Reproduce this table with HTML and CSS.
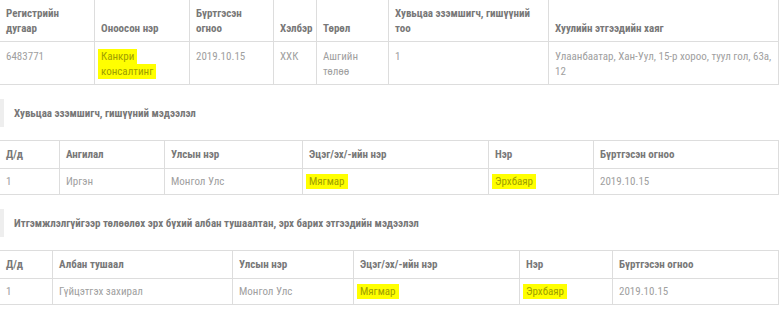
FILE: index.html
```html
<!DOCTYPE html>
<html lang="mn">
<head>
<meta charset="utf-8">
<link rel="stylesheet" href="styles.css">
</head>
<body>
<div class="page">
  <table class="grid grid-main">
    <colgroup>
      <col style="width:95px"><col style="width:95px"><col style="width:84px"><col style="width:43px"><col style="width:72px"><col style="width:160px"><col style="width:230px">
    </colgroup>
    <thead>
      <tr>
        <th>Регистрийн дугаар</th>
        <th>Оноосон нэр</th>
        <th>Бүртгэсэн огноо</th>
        <th>Хэлбэр</th>
        <th>Төрөл</th>
        <th>Хувьцаа эзэмшигч, гишүүний тоо</th>
        <th>Хуулийн этгээдийн хаяг</th>
      </tr>
    </thead>
    <tbody>
      <tr>
        <td>6483771</td>
        <td><span class="mark mark-name">Канкри<br>консалтинг</span></td>
        <td>2019.10.15</td>
        <td>ХХК</td>
        <td>Ашгийн төлөө</td>
        <td>1</td>
        <td>Улаанбаатар, Хан-Уул, 15-р хороо, туул гол, 63а, 12</td>
      </tr>
    </tbody>
  </table>

  <h3 class="section-title">Хувьцаа эзэмшигч, гишүүний мэдээлэл</h3>

  <table class="grid grid-small">
    <colgroup>
      <col style="width:60px"><col style="width:105px"><col style="width:138px"><col style="width:186px"><col style="width:105px"><col style="width:185px">
    </colgroup>
    <thead>
      <tr>
        <th>Д/д</th>
        <th>Ангилал</th>
        <th>Улсын нэр</th>
        <th>Эцэг/эх/-ийн нэр</th>
        <th>Нэр</th>
        <th>Бүртгэсэн огноо</th>
      </tr>
    </thead>
    <tbody>
      <tr>
        <td>1</td>
        <td>Иргэн</td>
        <td>Монгол Улс</td>
        <td><span class="mark">Мягмар</span></td>
        <td><span class="mark">Эрхбаяр</span></td>
        <td>2019.10.15</td>
      </tr>
    </tbody>
  </table>

  <h3 class="section-title">Итгэмжлэлгүйгээр төлөөлөх эрх бүхий албан тушаалтан, эрх барих этгээдийн мэдээлэл</h3>

  <table class="grid grid-small">
    <colgroup>
      <col style="width:53px"><col style="width:180px"><col style="width:121px"><col style="width:166px"><col style="width:93px"><col style="width:166px">
    </colgroup>
    <thead>
      <tr>
        <th>Д/д</th>
        <th>Албан тушаал</th>
        <th>Улсын нэр</th>
        <th>Эцэг/эх/-ийн нэр</th>
        <th>Нэр</th>
        <th>Бүртгэсэн огноо</th>
      </tr>
    </thead>
    <tbody>
      <tr>
        <td>1</td>
        <td>Гүйцэтгэх захирал</td>
        <td>Монгол Улс</td>
        <td><span class="mark">Мягмар</span></td>
        <td><span class="mark">Эрхбаяр</span></td>
        <td>2019.10.15</td>
      </tr>
    </tbody>
  </table>
</div>
</body>
</html>
```
FILE: styles.css
```css
html, body {
  margin: 0;
  padding: 0;
  background: #ffffff;
}

body {
  font-family: "Roboto Condensed", "Liberation Sans Narrow", Roboto, "Noto Sans", sans-serif;
  font-stretch: condensed;
  font-size: 11px;
  line-height: 15px;
  color: #9a9a9a;
}

.page {
  margin-left: -1px;
  width: 780px;
}

.grid {
  width: 780px;
  border-collapse: collapse;
  table-layout: fixed;
}

.grid th,
.grid td {
  border: 1px solid #dddddd;
  text-align: left;
  padding: 5px 6px;
}

.grid th {
  font-weight: 700;
  color: #787878;
}

.grid td {
  color: #a0a0a0;
  vertical-align: top;
}

.grid-main {
  margin-top: -1px;
}

.grid-main th {
  vertical-align: bottom;
  padding: 6px 6px 5px;
}

.grid-main td {
  padding: 7px 6px 5px;
}

.grid-small th {
  padding: 6px 6px;
  vertical-align: middle;
}

.grid-small td {
  padding: 5px 6px;
}

.section-title {
  margin: 14px 0 13px 1px;
  height: 28px;
  display: flex;
  align-items: center;
  border-left: 4px solid #eeeeee;
  padding-left: 10px;
  font-size: 11px;
  font-weight: 700;
  color: #777777;
}

.mark {
  background: #ffff00;
  color: #a0a000;
  padding: 1px 3px;
  margin-left: -3px;
  box-decoration-break: clone;
  -webkit-box-decoration-break: clone;
}

.mark-name {
  line-height: 15px;
}
```
